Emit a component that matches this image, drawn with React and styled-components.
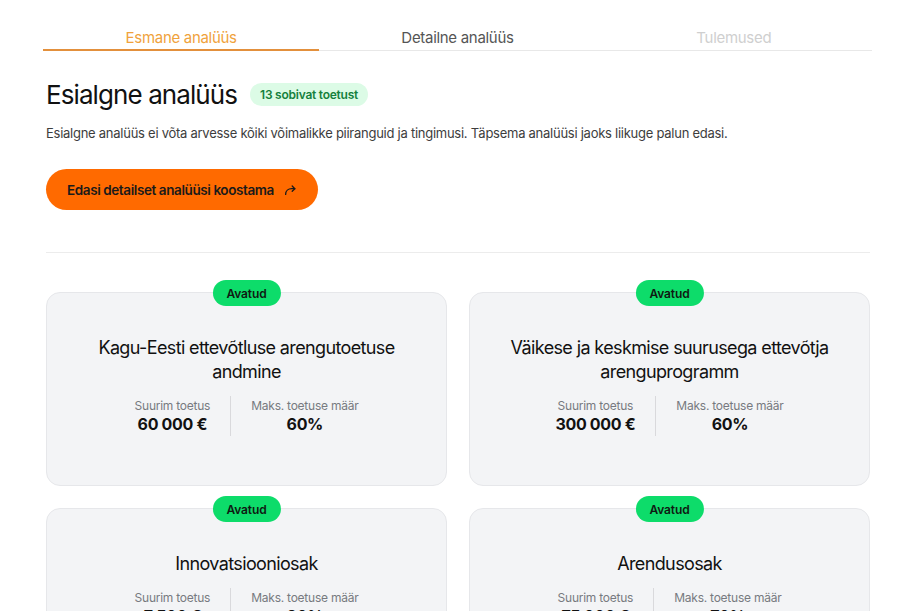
import React from 'react';
import styled, { createGlobalStyle } from 'styled-components';

const GlobalStyle = createGlobalStyle`
  * { box-sizing: border-box; }
  body {
    margin: 0;
    background: #ffffff;
    font-family: Inter, "Noto Sans", sans-serif;
    color: #161616;
  }
`

const Page = styled.div`
  display: flex;
  flex-direction: column;
  padding: 28px 40px 0 43px;
`

const Tabs = styled.div`
  display: grid;
  grid-template-columns: repeat(3, 1fr);
  border-bottom: 1px solid #e8e8e8;
`

const Tab = styled.div`
  display: flex;
  justify-content: center;
  padding-bottom: 2px;
  margin-bottom: -1px;
  font-size: 15px;
  letter-spacing: -0.02em;
  color: ${props => props.color};
  border-bottom: 2px solid ${props => props.active ? '#e3903c' : 'transparent'};
`

const Content = styled.div`
  display: flex;
  flex-direction: column;
  padding: 0 2px 0 3px;
`

const Heading = styled.div`
  display: flex;
  align-items: center;
  gap: 13px;
  margin-top: 28px;
`

const Title = styled.h1`
  margin: 0;
  font-size: 26px;
  font-weight: 400;
  letter-spacing: -0.035em;
  color: #111;
`

const CountBadge = styled.span`
  display: inline-flex;
  align-items: center;
  height: 23px;
  padding: 0 10px;
  border-radius: 12px;
  background: #dcfbe6;
  color: #15803d;
  font-size: 12px;
  font-weight: 600;
  letter-spacing: -0.02em;
`

const Lead = styled.p`
  margin: 15px 0 0;
  font-size: 13px;
  letter-spacing: -0.02em;
  color: #3d3d3d;
`

const CtaButton = styled.button`
  display: inline-flex;
  align-self: flex-start;
  align-items: center;
  gap: 9px;
  height: 41px;
  margin-top: 28px;
  padding: 0 21px;
  border: none;
  border-radius: 21px;
  background: #ff6a00;
  color: #1a1a1a;
  font-family: inherit;
  font-size: 13.5px;
  font-weight: 600;
  letter-spacing: -0.03em;
  cursor: pointer;
`

const Divider = styled.hr`
  margin: 42px 0 39px;
  border: none;
  border-top: 1px solid #ececec;
`

const Grid = styled.div`
  display: grid;
  grid-template-columns: 1fr 1fr;
  column-gap: 22px;
  row-gap: 22px;
`

const Card = styled.div`
  position: relative;
  display: flex;
  flex-direction: column;
  align-items: center;
  height: 194px;
  padding: 43px 30px 0;
  background: #f3f4f6;
  border: 1px solid #e6e7ea;
  border-radius: 14px;
`

const StatusBadge = styled.span`
  position: absolute;
  top: -13px;
  left: 50%;
  transform: translateX(-50%);
  display: inline-flex;
  align-items: center;
  height: 26px;
  padding: 0 14px;
  border-radius: 13px;
  background: #0ddc6a;
  color: #0f1a12;
  font-size: 12px;
  font-weight: 600;
  letter-spacing: -0.01em;
`

const CardTitle = styled.h2`
  margin: 0;
  font-size: 18px;
  line-height: 24px;
  font-weight: 400;
  letter-spacing: -0.035em;
  text-align: center;
  color: #111;
`

const Stats = styled.div`
  display: flex;
  margin-top: 12px;
`

const Stat = styled.div`
  display: flex;
  flex-direction: column;
  align-items: center;
  gap: 1px;
  padding: 2px 20px;
  & + & {
    border-left: 1px solid #d9d9dc;
  }
`

const StatLabel = styled.span`
  font-size: 12px;
  letter-spacing: -0.02em;
  color: #777a80;
`

const StatValue = styled.span`
  font-size: 16px;
  font-weight: 700;
  letter-spacing: -0.02em;
  color: #111;
`

const ForwardIcon = () => (
  <svg width="14" height="14" viewBox="0 0 16 16" fill="none" stroke="#1a1a1a" strokeWidth="1.5" strokeLinecap="round" strokeLinejoin="round">
    <path d="M3 13 C3 9 6 6.5 10 6.5 H13.5" />
    <path d="M10.5 3.5 L13.5 6.5 L10.5 9.5" />
  </svg>
)

const grants = [
  { title: 'Kagu-Eesti ettevõtluse arengutoetuse andmine', max: '60 000 €', rate: '60%' },
  { title: 'Väikese ja keskmise suurusega ettevõtja arenguprogramm', max: '300 000 €', rate: '60%' },
  { title: 'Innovatsiooniosak', max: '7 500 €', rate: '80%' },
  { title: 'Arendusosak', max: '75 000 €', rate: '70%' },
]

const GrantCard = ({ grant }) => (
  <Card>
    <StatusBadge>Avatud</StatusBadge>
    <CardTitle>{grant.title}</CardTitle>
    <Stats>
      <Stat>
        <StatLabel>Suurim toetus</StatLabel>
        <StatValue>{grant.max}</StatValue>
      </Stat>
      <Stat>
        <StatLabel>Maks. toetuse määr</StatLabel>
        <StatValue>{grant.rate}</StatValue>
      </Stat>
    </Stats>
  </Card>
)

const App = () => {
  return (
    <>
      <GlobalStyle />
      <Page>
        <Tabs>
          <Tab active color={'#f0a23c'}>Esmane analüüs</Tab>
          <Tab color={'#555'}>Detailne analüüs</Tab>
          <Tab color={'#cfcfcf'}>Tulemused</Tab>
        </Tabs>
        <Content>
          <Heading>
            <Title>Esialgne analüüs</Title>
            <CountBadge>13 sobivat toetust</CountBadge>
          </Heading>
          <Lead>Esialgne analüüs ei võta arvesse kõiki võimalikke piiranguid ja tingimusi. Täpsema analüüsi jaoks liikuge palun edasi.</Lead>
          <CtaButton>
            Edasi detailset analüüsi koostama
            <ForwardIcon />
          </CtaButton>
          <Divider />
          <Grid>
            {grants.map(g => (
              <GrantCard key={g.title} grant={g} />
            ))}
          </Grid>
        </Content>
      </Page>
    </>
  );
}

export default App;
